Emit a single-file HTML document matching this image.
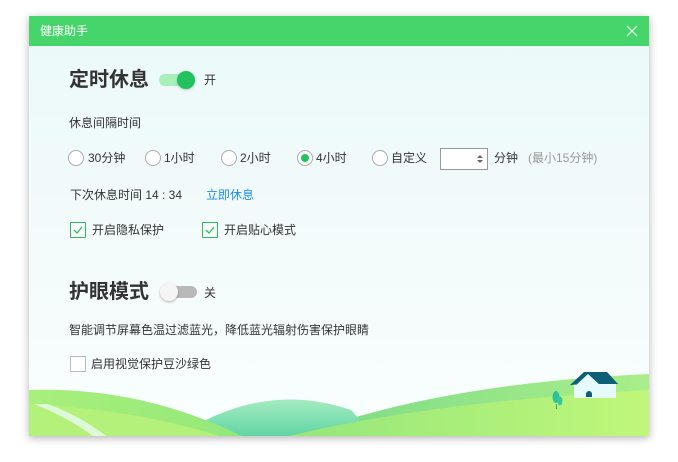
<!DOCTYPE html>
<html><head><meta charset="utf-8"><style>
*{margin:0;padding:0;box-sizing:border-box}
body{width:678px;height:462px;background:#fff;position:relative;overflow:hidden;font-family:"Liberation Sans","Noto Sans CJK SC",sans-serif;color:#333;font-size:12px}
.win{position:absolute;left:29px;top:16px;width:620px;height:420px;background:linear-gradient(#ebf9f9,#f4fbfb 60%,#fafefe);box-shadow:0 2px 8px rgba(0,0,0,.3);overflow:hidden}
.tb{position:absolute;left:0;top:0;width:620px;height:30px;background:#46d56a;color:#fff;font-size:12px;line-height:30px;padding-left:11px}
.x{position:absolute;right:10px;top:8px;width:14px;height:14px}
.a{position:absolute;white-space:nowrap;line-height:16px}
.h{font-size:20px;font-weight:bold;color:#333;line-height:24px}
.r{position:absolute;width:16px;height:16px;border:1px solid #aaa;border-radius:50%;background:#fff}
.r.on::after{content:"";position:absolute;left:3px;top:3px;width:8px;height:8px;border-radius:50%;background:#22c35e}
.cb{position:absolute;width:16px;height:16px;border:1px solid #26c15c;background:#fff;border-radius:1px}
.cb svg{position:absolute;left:2px;top:2px}
.cb.off{border-color:#bbb}
</style></head><body>
<div class="win">
<div class="tb">健康助手
<svg class="x" viewBox="0 0 14 14"><path d="M2 2L12 12M12 2L2 12" stroke="#fff" stroke-width="1.3" opacity=".8"/></svg></div>

<div class="a h" style="left:40px;top:52px">定时休息</div>
<div style="position:absolute;left:130px;top:58px;width:36px;height:12px;border-radius:6px;background:#a8efb9"></div>
<div style="position:absolute;left:148px;top:55px;width:18px;height:18px;border-radius:50%;background:#22c35e;box-shadow:0 1px 2px rgba(0,0,0,.2)"></div>
<div class="a" style="left:175px;top:56px">开</div>

<div class="a" style="left:40px;top:99px">休息间隔时间</div>

<div class="r" style="left:39px;top:134px"></div><div class="a" style="left:59px;top:134px">30分钟</div>
<div class="r" style="left:116px;top:134px"></div><div class="a" style="left:135px;top:134px">1小时</div>
<div class="r" style="left:192px;top:134px"></div><div class="a" style="left:211px;top:134px">2小时</div>
<div class="r on" style="left:268px;top:134px"></div><div class="a" style="left:287px;top:134px">4小时</div>
<div class="r" style="left:343px;top:134px"></div><div class="a" style="left:362px;top:134px">自定义</div>
<div style="position:absolute;left:411px;top:132px;width:48px;height:22px;border:1px solid #999;background:#fff">
<svg style="position:absolute;right:4px;top:5px" width="6" height="10"><path d="M0 4L3 1L6 4Z M0 6L3 9L6 6Z" fill="#666"/></svg></div>
<div class="a" style="left:465px;top:134px">分钟</div>
<div class="a" style="left:499px;top:134px;color:#999">(最小15分钟)</div>

<div class="a" style="left:41px;top:171px">下次休息时间 14 : 34</div>
<div class="a" style="left:177px;top:171px;color:#1f8cf0">立即休息</div>

<div class="cb" style="left:41px;top:206px"><svg width="10" height="10"><path d="M1 5L4 8L9 2" stroke="#26c15c" stroke-width="1.3" fill="none"/></svg></div>
<div class="a" style="left:63px;top:206px">开启隐私保护</div>
<div class="cb" style="left:173px;top:206px"><svg width="10" height="10"><path d="M1 5L4 8L9 2" stroke="#26c15c" stroke-width="1.3" fill="none"/></svg></div>
<div class="a" style="left:195px;top:206px">开启贴心模式</div>

<div class="a h" style="left:40px;top:264px">护眼模式</div>
<div style="position:absolute;left:132px;top:270px;width:36px;height:12px;border-radius:6px;background:#b9b9b9"></div>
<div style="position:absolute;left:131px;top:267px;width:18px;height:18px;border-radius:50%;background:#f5f5f5;box-shadow:0 1px 2px rgba(0,0,0,.3)"></div>
<div class="a" style="left:175px;top:269px">关</div>

<div class="a" style="left:40px;top:306px">智能调节屏幕色温过滤蓝光，降低蓝光辐射伤害保护眼睛</div>
<div class="cb off" style="left:41px;top:340px"></div>
<div class="a" style="left:62px;top:340px">启用视觉保护豆沙绿色</div>

<svg style="position:absolute;left:0;top:354px" width="620" height="66" viewBox="0 0 620 66">
<defs>
<linearGradient id="g1" x1="0" x2="1"><stop offset="0" stop-color="#a9ef7c"/><stop offset="1" stop-color="#93e87a"/></linearGradient>
<linearGradient id="g2" x1="0" x2="0" y1="0" y2="1"><stop offset="0" stop-color="#a6ebc0"/><stop offset="1" stop-color="#5fd6a6"/></linearGradient>
<linearGradient id="g3" x1="0" x2="1"><stop offset="0" stop-color="#7fdc86"/><stop offset="1" stop-color="#a9ee8a"/></linearGradient>
<linearGradient id="g4" x1="0" x2="1"><stop offset="0" stop-color="#95e67b"/><stop offset="1" stop-color="#c0f77a"/></linearGradient>
</defs>
<path d="M310 52 Q440 12 620 4 L620 66 L300 66Z" fill="url(#g3)"/>
<path d="M173 52 Q247 14 322 40 L345 66 L170 66Z" fill="url(#g2)"/>
<path d="M0 20 Q110 16 213 66 L0 66Z" fill="url(#g1)"/>
<path d="M0 34 Q110 40 190 66 L0 66Z" fill="#b4f17b"/>
<path d="M18 34 Q50 45 77 66 L64 66 Q40 48 5 34Z" fill="#def9d8"/>
<path d="M260 66 Q400 32 620 20 L620 66Z" fill="url(#g4)"/>
<ellipse cx="527" cy="27" rx="3.5" ry="6" fill="#2fc29a"/><ellipse cx="531" cy="31" rx="2.5" ry="4.5" fill="#35c89a"/>
<rect x="527" y="34" width="1" height="5" fill="#2fa07a"/>
<rect x="545" y="13" width="42" height="15" fill="#e6f9fb"/>
<path d="M541 15 L555 2 L578 2 L589 14 L555 14Z" fill="#0d5f78"/>
<path d="M545 17 L559 4 L573 17Z" fill="#e6f9fb"/>
<path d="M557 24 a3 3 0 0 1 6 0 v3 h-6z" fill="#0d5f78"/>
</svg>
</div>
</body></html>
